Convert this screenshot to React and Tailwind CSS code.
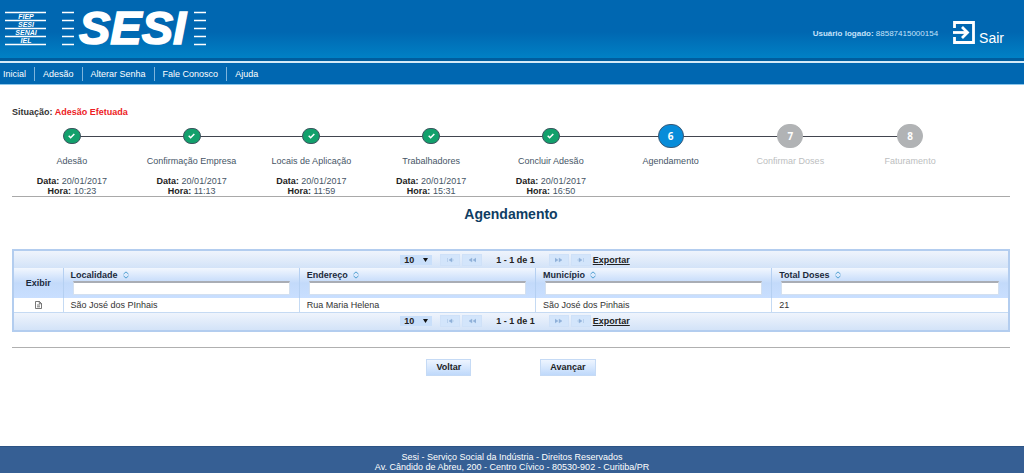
import { useState } from 'react';

const MENU = ['Inicial', 'Adesão', 'Alterar Senha', 'Fale Conosco', 'Ajuda'];

const STEPS = [
  { label: 'Adesão', status: 'done', date: '20/01/2017', time: '10:23' },
  { label: 'Confirmação Empresa', status: 'done', date: '20/01/2017', time: '11:13' },
  { label: 'Locais de Aplicação', status: 'done', date: '20/01/2017', time: '11:59' },
  { label: 'Trabalhadores', status: 'done', date: '20/01/2017', time: '15:31' },
  { label: 'Concluir Adesão', status: 'done', date: '20/01/2017', time: '16:50' },
  { label: 'Agendamento', status: 'current' },
  { label: 'Confirmar Doses', status: 'pending' },
  { label: 'Faturamento', status: 'pending' },
];

const COLUMNS = [
  { key: 'localidade', label: 'Localidade' },
  { key: 'endereco', label: 'Endereço' },
  { key: 'municipio', label: 'Município' },
  { key: 'doses', label: 'Total Doses' },
];

const ROWS = [
  {
    localidade: 'São José dos PInhais',
    endereco: 'Rua Maria Helena',
    municipio: 'São José dos Pinhais',
    doses: '21',
  },
];

function Logo() {
  return (
    <svg width="204" height="58" viewBox="0 0 204 58" className="text-white" aria-label="SESI">
      <g stroke="currentColor" strokeWidth="1.3">
        {[12.5, 20.5, 28.5, 36.5, 44.5].map((y) => (
          <path key={y} d={`M1 ${y}h41M58 ${y}h12M190 ${y}h12`} />
        ))}
      </g>
      <g
        fill="currentColor"
        fontFamily="'Liberation Sans', Arial, sans-serif"
        fontWeight="bold"
        fontStyle="italic"
      >
        <g fontSize="7" textAnchor="middle">
          <text x="22" y="19">FIEP</text>
          <text x="22" y="27">SESI</text>
          <text x="22" y="35">SENAI</text>
          <text x="22" y="43">IEL</text>
        </g>
        <text x="75" y="44" fontSize="47" stroke="currentColor" strokeWidth="1.6">SESI</text>
      </g>
    </svg>
  );
}

function ExitIcon() {
  return (
    <svg width="22" height="23" viewBox="0 0 22 23" fill="none" stroke="currentColor">
      <path d="M1.5 7V1.5h19v20h-19V16" strokeWidth="2.8" />
      <path d="M0 11.5h14" strokeWidth="2.8" />
      <path d="M9 6l5.5 5.5L9 17" strokeWidth="2.8" />
    </svg>
  );
}

function SortIcon() {
  return (
    <svg width="6" height="8" viewBox="0 0 6 8" fill="none" stroke="#4f9fd0" className="shrink-0">
      <path d="M.5 3.1L3 .9l2.5 2.2M.5 4.9L3 7.1l2.5-2.2" />
    </svg>
  );
}

function DocIcon() {
  return (
    <svg width="7" height="8" viewBox="0 0 7 8" fill="none" stroke="#555" strokeWidth="0.8">
      <path d="M.5.5h4l2 2v5h-6zM4.3.5v2.2h2.2M2 4h3M2 5.8h3" />
    </svg>
  );
}

function StepMarker({ step, number }) {
  if (step.status === 'done') {
    return (
      <span className="relative flex h-4 w-[18px] items-center justify-center rounded-full border border-[#3f5560] bg-[#12a06c]">
        <svg width="7" height="6" viewBox="0 0 7 6" fill="none" stroke="#fff" strokeWidth="1.6">
          <path d="M.7 2.8l1.9 1.9L6.3 1" />
        </svg>
      </span>
    );
  }
  return (
    <span
      className={`relative flex h-6 w-[26px] items-center justify-center rounded-full border font-['Open_Sans',sans-serif] text-[10px] font-bold text-white ${
        step.status === 'current' ? 'border-[#3a5a78] bg-[#078cd9]' : 'border-[#b1b3b5] bg-[#b1b3b5]'
      }`}
    >
      {number}
    </span>
  );
}

function Step({ step, number, isLast }) {
  return (
    <li className="w-[12%] text-center">
      <div className="relative flex h-6 items-center justify-center">
        {!isLast && <span className="absolute left-1/2 top-3 h-px w-full bg-[#42454f]" />}
        <StepMarker step={step} number={number} />
      </div>
      <p className={`mt-2 h-[20px] leading-[11px] ${step.status === 'pending' ? 'text-[#bcbec0]' : 'text-[#465566]'}`}>
        {step.label}
      </p>
      {step.date && (
        <p className="text-[#465566]">
          <b className="text-[#222]">Data:</b> {step.date}
          <br />
          <b className="text-[#222]">Hora:</b> {step.time}
        </p>
      )}
    </li>
  );
}

const PAGE_ICONS = {
  first: 'M.5 1v4M5 1L2 3l3 2zM5 3h2',
  prev: 'M3 1L0 3l3 2zM7 1L4 3l3 2z',
  next: 'M0 1l3 2-3 2zM4 1l3 2-3 2z',
  last: 'M6.5 1v4M2 1l3 2-3 2zM0 3h2',
};

function PageButton({ icon, label }) {
  return (
    <button
      type="button"
      aria-label={label}
      disabled
      className="flex h-3 w-5 items-center justify-center border border-[#cfe1f8] bg-[#d3e5fb]"
    >
      <svg width="7" height="6" viewBox="0 0 7 6" fill="#8fb0d8">
        <path d={PAGE_ICONS[icon]} stroke="#8fb0d8" strokeWidth="0.4" />
      </svg>
    </button>
  );
}

function Paginator() {
  const [size, setSize] = useState('10');

  return (
    <div className="flex h-[17px] items-center justify-center bg-linear-to-b from-[#eff4fc] to-[#d3e3f8] pl-2 font-bold text-[#222]">
      <div className="relative mr-2">
        <select
          aria-label="Registros por página"
          value={size}
          onChange={(e) => setSize(e.target.value)}
          className="block h-[10px] w-8 appearance-none bg-[#c9dffa] pl-1 leading-[10px]"
        >
          <option>10</option>
          <option>20</option>
          <option>50</option>
        </select>
        <svg width="5" height="4" viewBox="0 0 5 4" className="pointer-events-none absolute right-1 top-[3px]">
          <path d="M0 0h5L2.5 4z" fill="#111" />
        </svg>
      </div>
      <div className="flex gap-0.5">
        <PageButton icon="first" label="Primeira página" />
        <PageButton icon="prev" label="Página anterior" />
      </div>
      <span className="px-[14px]">1 - 1 de 1</span>
      <div className="flex gap-0.5">
        <PageButton icon="next" label="Próxima página" />
        <PageButton icon="last" label="Última página" />
      </div>
      <a href="#exportar" className="ml-0.5 underline">Exportar</a>
    </div>
  );
}

function DataTable() {
  return (
    <div className="border-2 border-[#b3cdef]">
      <Paginator />
      <table className="w-full table-fixed border-collapse">
        <thead>
          <tr className="h-[30px] bg-linear-to-b from-[#f2f7fe] via-[#c3dafa] to-[#c9dfff] text-[#1c2a3c]">
            <th className="w-[49px] font-bold">Exibir</th>
            {COLUMNS.map((col) => (
              <th key={col.key} className="border-l border-[#b5d0f2] px-[7px] pb-[3px] pt-px text-left align-top font-bold">
                <label htmlFor={col.key} className="flex h-3 items-center gap-[5px]">
                  {col.label}
                  <SortIcon />
                </label>
                <div className="px-[2px]">
                  <input
                    id={col.key}
                    type="text"
                    className="block h-[14px] w-full border border-t-2 border-[#d3e0f0] border-t-[#a9adb5] bg-white px-0.5 font-normal outline-none"
                  />
                </div>
              </th>
            ))}
          </tr>
        </thead>
        <tbody>
          {ROWS.map((row) => (
            <tr key={row.localidade} className="h-[14px] border-b border-[#c5daf3] text-[#333]">
              <td className="p-0">
                <button type="button" aria-label="Exibir" className="mx-auto block">
                  <DocIcon />
                </button>
              </td>
              {COLUMNS.map((col) => (
                <td key={col.key} className="border-l border-[#c5daf3] px-[7px] py-0">
                  {row[col.key]}
                </td>
              ))}
            </tr>
          ))}
        </tbody>
      </table>
      <Paginator />
    </div>
  );
}

function ActionButton({ children }) {
  return (
    <button
      type="button"
      className="h-[17px] border border-[#c5daf5] bg-linear-to-b from-[#eef5ff] to-[#bfd9fb] px-[9px] font-bold text-[#222]"
    >
      {children}
    </button>
  );
}

export default function App() {
  return (
    <div className="flex min-h-screen flex-col bg-white font-['Liberation_Sans',Arial,sans-serif] text-[9px] leading-[10px]">
      <header>
        <div className="flex h-[61px] items-start justify-between border-b-[3px] border-[#005d9e] bg-linear-to-b from-[#0067b1] from-55% to-[#0081c5] pl-1 pr-5 text-white">
          <Logo />
          <div className="flex items-end gap-[15px] pt-[21px]">
            <p className="self-center pt-0.5 text-[8px] text-[#c4e2fa]">
              <b>Usuário logado:</b> 88587415000154
            </p>
            <a href="#sair" className="flex items-end gap-1 text-sm leading-3">
              <ExitIcon />
              Sair
            </a>
          </div>
        </div>
        <nav className="flex h-6 items-center border-b border-t-2 border-b-[#8cc6ea] border-t-[#d5eaf8] bg-[#0067b1] text-white">
          {MENU.map((item, i) => (
            <a
              key={item}
              href={`#${i}`}
              className={`pr-2 leading-[14px] ${i === 0 ? 'pl-[3px]' : 'border-l border-[#7db4dc] pl-2'}`}
            >
              {item}
            </a>
          ))}
        </nav>
      </header>

      <main className="pb-10 pl-3 pr-3.5 pt-[22px]">
        <p className="font-bold text-[#333]">
          Situação: <span className="text-[#ed1c24]">Adesão Efetuada</span>
        </p>

        <ol className="mt-[7px] flex border-b border-[#a9a9a9]">
          {STEPS.map((step, i) => (
            <Step key={step.label} step={step} number={i + 1} isLast={i === STEPS.length - 1} />
          ))}
        </ol>

        <h1 className="mb-[25px] mt-[7px] text-center text-[14px] font-bold leading-5 text-[#0f3d63]">
          Agendamento
        </h1>

        <DataTable />

        <hr className="mt-[15px] border-[#b0b0b0]" />

        <div className="mt-[11px] flex justify-center gap-[69px]">
          <ActionButton>Voltar</ActionButton>
          <ActionButton>Avançar</ActionButton>
        </div>
      </main>

      <footer className="mt-auto border-t border-[#2c5384] bg-[#365f94] pb-px pt-[5px] text-center text-white">
        <p>Sesi - Serviço Social da Indústria - Direitos Reservados</p>
        <p>Av. Cândido de Abreu, 200 - Centro Cívico - 80530-902 - Curitiba/PR</p>
      </footer>
    </div>
  );
}
